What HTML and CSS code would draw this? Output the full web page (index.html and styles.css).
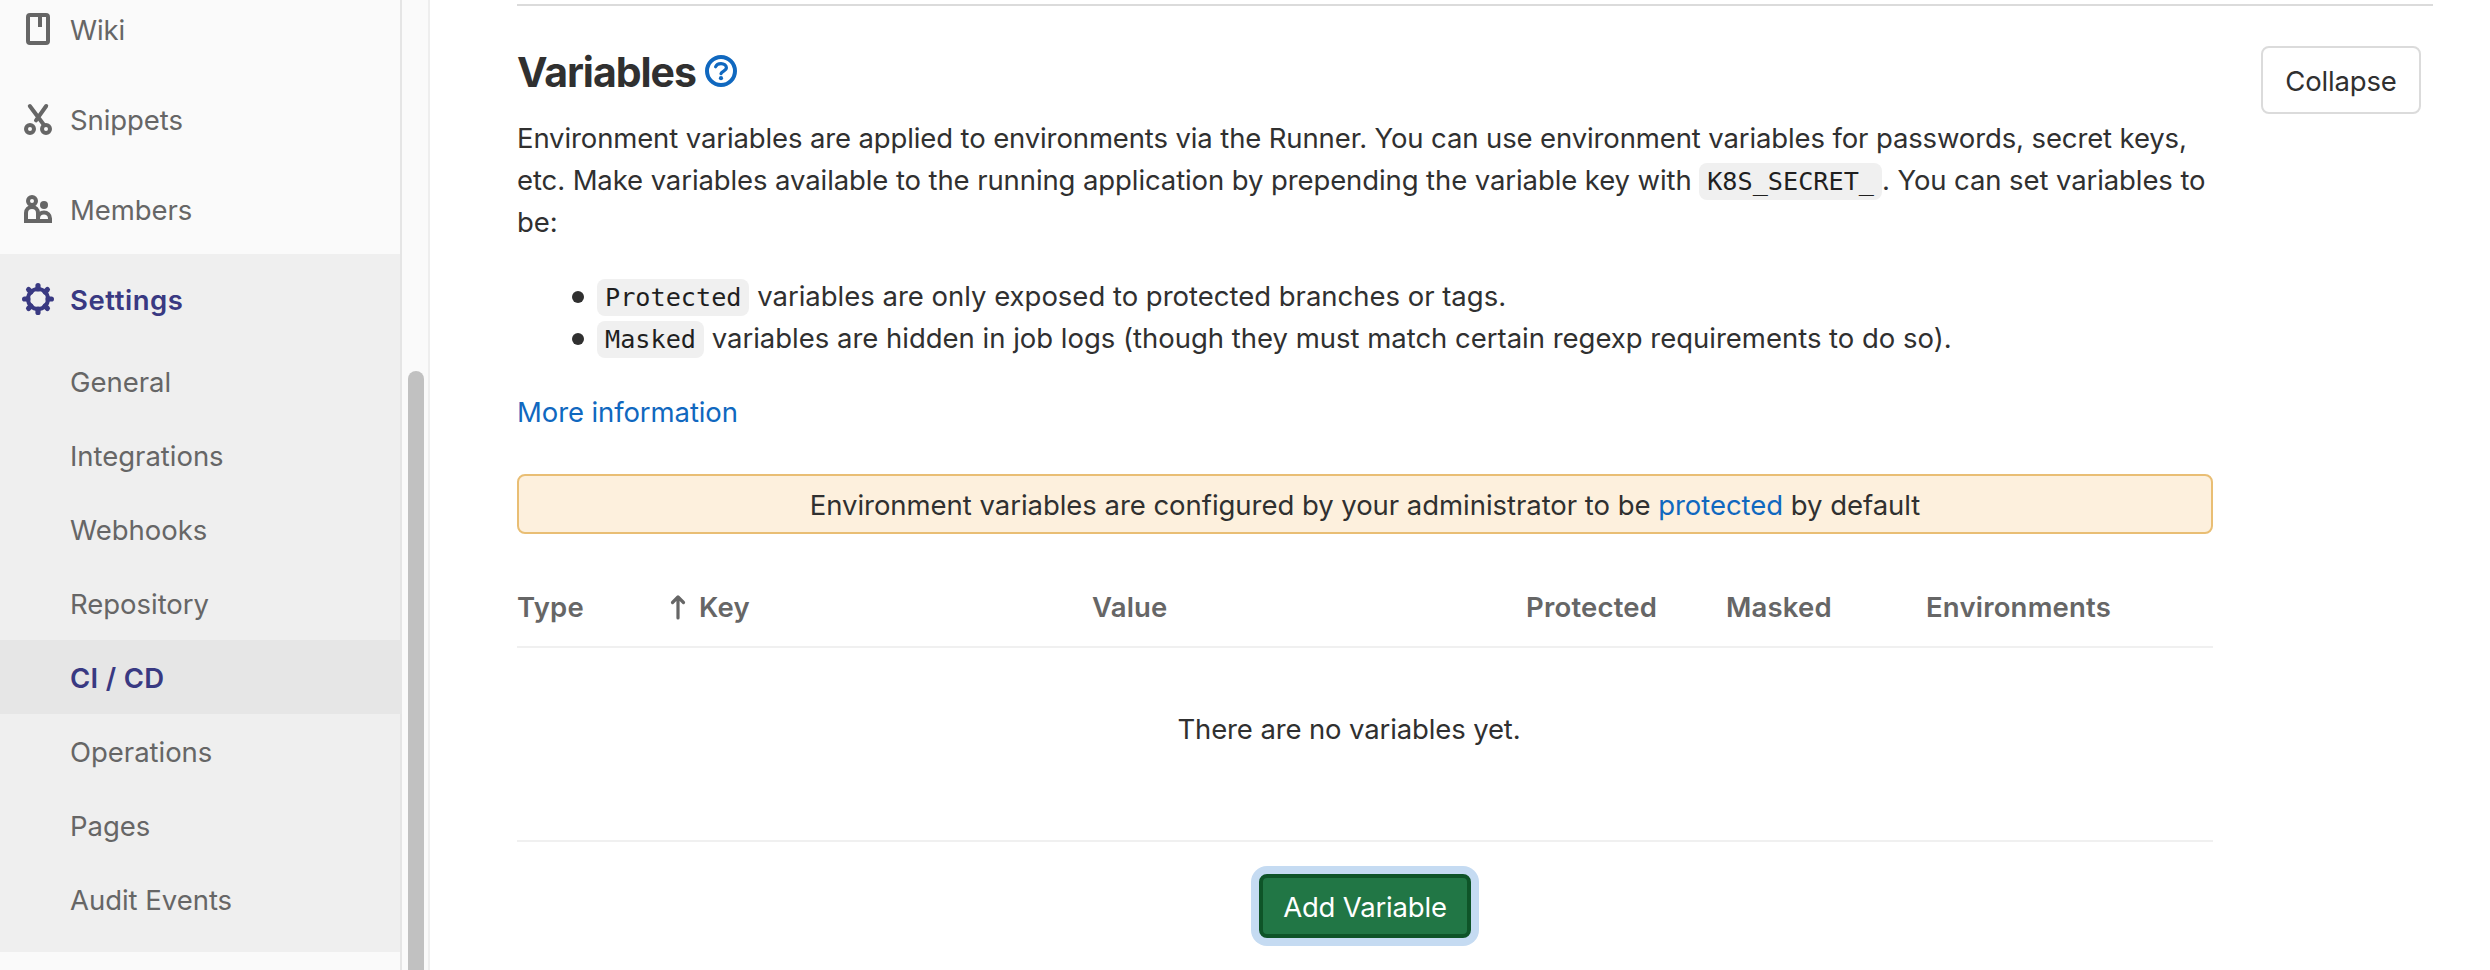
FILE: index.html
```html
<!DOCTYPE html>
<html lang="en">
<head>
<meta charset="utf-8">
<title>CI / CD Settings</title>
<link rel="stylesheet" href="styles.css">
</head>
<body>
<div class="page">
  <aside class="sidebar">
    <nav class="nav">
      <a class="nav-item first"><svg class="icon" viewBox="0 0 16 16"><rect x="3" y="1" width="10" height="14" rx="1" fill="none" stroke="currentColor" stroke-width="2"/><path d="M8 1h2v6H8z" fill="currentColor"/></svg><span>Wiki</span></a>
      <a class="nav-item"><svg class="icon" viewBox="0 0 16 16" fill="none" stroke="currentColor" stroke-width="2" stroke-linecap="round"><circle cx="4" cy="13" r="2"/><circle cx="12" cy="13" r="2"/><path d="M3.900 1.500 11 11M12.100 1.500 7 8.700"/></svg><span>Snippets</span></a>
      <a class="nav-item"><svg class="icon" viewBox="0 0 16 16"><g fill="none" stroke="currentColor" stroke-width="2"><circle cx="5" cy="4" r="2"/><path d="M2 14v-4a3 3 0 0 1 6 0v4zM8 14v-1.300a3 3 0 0 1 6 0V14z"/></g><circle cx="11" cy="6" r="2" fill="currentColor"/></svg><span>Members</span></a>
      <section class="group">
        <a class="nav-item active"><svg class="icon" viewBox="0 0 16 16"><circle cx="8" cy="8" r="5" fill="none" stroke="currentColor" stroke-width="2"/><path d="M8 1.300V3M8 13v1.700M1.300 8H3M13 8h1.700M3.300 3.300l1.200 1.200M11.500 11.500l1.200 1.200M3.300 12.700l1.200-1.200M11.500 4.500l1.200-1.200" stroke="currentColor" stroke-width="2.600" stroke-linecap="round"/></svg><span>Settings</span></a>
        <a class="sub-item">General</a>
        <a class="sub-item">Integrations</a>
        <a class="sub-item">Webhooks</a>
        <a class="sub-item">Repository</a>
        <a class="sub-item current">CI / CD</a>
        <a class="sub-item">Operations</a>
        <a class="sub-item">Pages</a>
        <a class="sub-item">Audit Events</a>
      </section>
    </nav>
    <div class="scroll-track"><div class="scroll-thumb"></div></div>
  </aside>
  <main class="main">
    <hr class="divider">
    <div class="section">
      <div class="content">
        <h4 class="title"><span>Variables</span><svg class="help" viewBox="0 0 16 16"><circle cx="8" cy="8" r="7" fill="none" stroke="currentColor" stroke-width="2"/><path d="M5.300 5.900C5.700 4.800 6.700 4.300 8 4.300c1.600 0 2.700.9 2.700 2.100C10.700 7.900 8.300 8 8 9.300" fill="none" stroke="currentColor" stroke-width="1.600" stroke-linecap="round"/><circle cx="8" cy="11.600" r="1.050" fill="currentColor"/></svg></h4>
        <p class="intro"><span class="lead">Environment variables are applied to environments via the Runner. You can use environment variables for passwords, secret keys,</span><br>etc. Make variables available to the running application by prepending the variable key with <code>K8S_SECRET_</code>. You can set variables to<br>be:</p>
        <ul class="kinds">
          <li><code>Protected</code> variables are only exposed to protected branches or tags.</li>
          <li><code>Masked</code> variables are hidden in job logs (though they must match certain regexp requirements to do so).</li>
        </ul>
        <p class="more"><a class="link">More information</a></p>
        <div class="alert">Environment variables are configured by your administrator to be <a class="link">protected</a> by default</div>
        <div class="table">
          <div class="thead">
            <span>Type</span>
            <span class="sorted"><svg class="arrow" viewBox="0 0 16 26" fill="none" stroke="currentColor" stroke-width="3.200" stroke-linecap="round" stroke-linejoin="round"><path d="M8 24V3M2.500 8.500 8 3l5.500 5.500"/></svg>Key</span>
            <span>Value</span>
            <span>Protected</span>
            <span>Masked</span>
            <span>Environments</span>
          </div>
          <div class="empty">There are no variables yet.</div>
        </div>
        <div class="actions"><button class="btn btn-add">Add Variable</button></div>
      </div>
      <button class="btn btn-collapse">Collapse</button>
    </div>
  </main>
</div>
</body>
</html>
```
FILE: styles.css
```css
* { box-sizing: border-box; }
body {
  margin: 0;
  background: #fff;
  color: #303030;
  font: 27.5px/42px Inter, "Liberation Sans", sans-serif;
  overflow: hidden;
}
.page { display: flex; height: 970px; }

.sidebar {
  display: flex;
  width: 430px;
  flex: none;
  background: #fafafa;
  border-right: 2px solid #eee;
  color: #666;
  overflow: hidden;
}
.nav { width: 402px; border-right: 2px solid #e5e5e5; }
.nav-item {
  display: flex;
  align-items: center;
  gap: 16px;
  height: 90px;
  padding: 0 22px;
  letter-spacing: -0.08px;
}
.nav-item span { padding-top: 2px; }
.nav-item.first { height: 74px; padding-bottom: 16px; }
.icon { width: 32px; height: 32px; flex: none; }
.group { padding-bottom: 16px; background: #efefef; }
.active, .current { color: #393982; font-weight: 600; }
.nav-item.active { letter-spacing: 0.55px; }
.sub-item {
  display: block;
  height: 74px;
  padding: 1px 0 0 70px;
  line-height: 74px;
  letter-spacing: -0.03px;
}
.current { margin-right: -2px; background: #e6e6e6; letter-spacing: 0.3px; }
.scroll-track { width: 26px; padding: 371px 4px 0 6px; }
.scroll-thumb { height: 700px; border-radius: 8px; background: #c1c1c1; }

.main { flex: 1; padding: 4px 57px 0 87px; }
.divider { height: 2px; margin: 0; border: 0; background: #dbdbdb; }
.section {
  display: flex;
  justify-content: space-between;
  align-items: flex-start;
  padding-right: 12px;
}
.content { width: 1696px; padding-top: 40px; white-space: nowrap; }
.title {
  display: flex;
  align-items: center;
  gap: 9px;
  height: 52px;
  margin: 0 0 19px;
  font-size: 41px;
  font-weight: 700;
  letter-spacing: -1.05px;
}
.help { width: 32px; height: 32px; margin-top: -2px; color: #1068bf; }
.intro, .more { margin: 0; letter-spacing: -0.1px; }
.lead { letter-spacing: -0.125px; }
.kinds { margin: 32px 0; padding-left: 80px; list-style: none; letter-spacing: -0.015px; }
.kinds li::before {
  content: "";
  display: inline-block;
  width: 12px;
  height: 12px;
  margin: 0 13px 0 -25px;
  border-radius: 50%;
  background: #303030;
  vertical-align: 3px;
}
code {
  padding: 4px 8px;
  border-radius: 8px;
  background: #f0f0f0;
  color: #1f1f1f;
  font: 25.2px/30px "DejaVu Sans Mono", monospace;
  letter-spacing: 0;
}
.link { color: #1068bf; }
.alert {
  height: 60px;
  margin-top: 41px;
  border: 2px solid #e9be74;
  border-radius: 8px;
  background: #fdf0dd;
  line-height: 58px;
  letter-spacing: -0.04px;
  text-align: center;
}
.thead {
  display: grid;
  grid-template-columns: 153px 422px 434px 200px 200px 1fr;
  align-items: start;
  height: 114px;
  padding-top: 52px;
  border-bottom: 2px solid #f0f0f0;
  color: #666;
  font-weight: 600;
  letter-spacing: 0.2px;
}
.sorted { display: flex; align-items: center; gap: 13px; }
.arrow { width: 16px; height: 26px; }
.empty {
  height: 194px;
  padding: 60px 32px 0 0;
  border-bottom: 2px solid #f0f0f0;
  letter-spacing: -0.13px;
  text-align: center;
}
.actions { display: flex; justify-content: center; padding-top: 32px; }
.btn { font: inherit; letter-spacing: -0.18px; padding: 1px 0 0; border-radius: 8px; }
.btn-add {
  width: 212px;
  height: 64px;
  border: 4px solid #0e5428;
  background: #217645;
  color: #fff;
  box-shadow: 0 0 0 8px #c5dbf2;
}
.btn-collapse {
  width: 160px;
  height: 68px;
  margin-top: 40px;
  border: 2px solid #dbdbdb;
  background: #fff;
  color: #303030;
}
```
